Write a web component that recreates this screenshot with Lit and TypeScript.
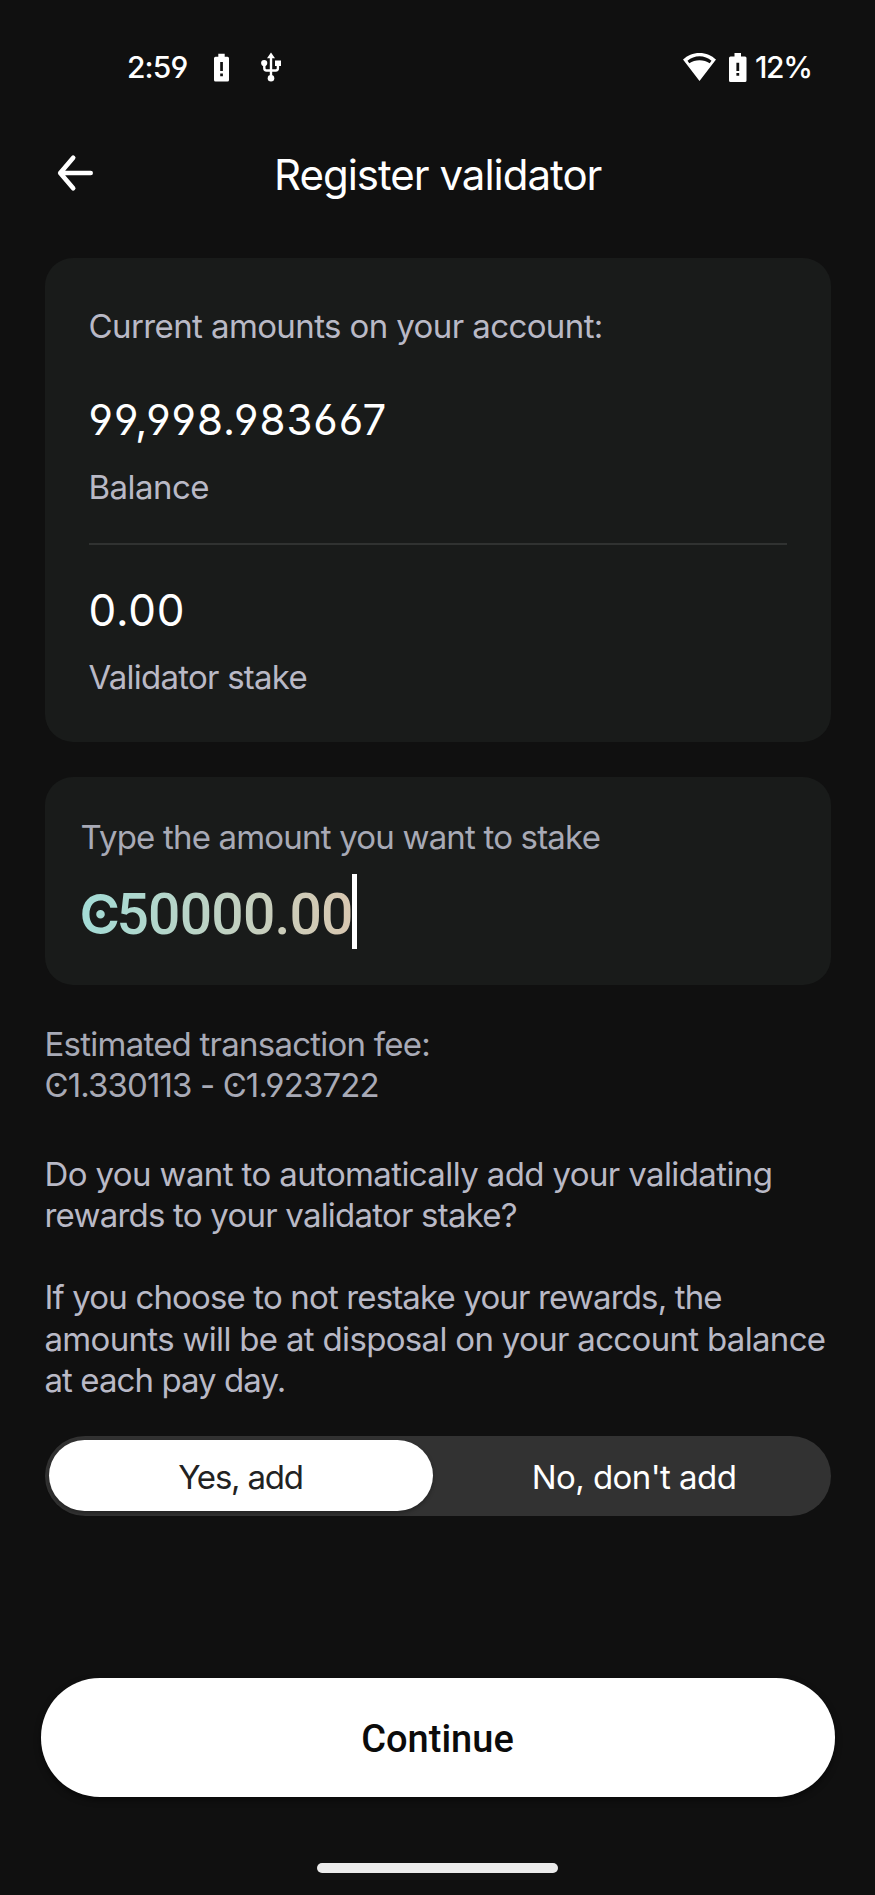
import { LitElement, html, css } from "lit";
import { customElement, property, state } from "lit/decorators.js";
import { styleMap } from "lit/directives/style-map.js";
import { classMap } from "lit/directives/class-map.js";

interface Line {
  text: string;
  tracking: number;
}

/** One line of text whose tracking is given in pixels. */
@customElement("tracked-line")
class TrackedLine extends LitElement {
  @property() text = "";
  @property({ type: Number }) tracking = 0;
  static styles = css`
    :host {
      display: block;
      white-space: nowrap;
    }
  `;
  render() {
    return html`<span style=${styleMap({ letterSpacing: `${this.tracking}px` })}>${this.text}</span>`;
  }
}

const tracked = (l: Line) => html`<tracked-line .text=${l.text} .tracking=${l.tracking}></tracked-line>`;

@customElement("status-bar")
class StatusBar extends LitElement {
  static styles = css`
    :host {
      display: flex;
      align-items: center;
      height: 134px;
      padding-left: 127px;
      font-size: 30px;
      font-weight: 500;
      color: #fff;
      letter-spacing: -0.9px;
    }
    .time {
      width: 60px;
      white-space: nowrap;
    }
    .level {
      width: 120px;
      margin-left: 8.5px;
      letter-spacing: -1.4px;
    }
    svg {
      display: block;
      flex: none;
    }
    .alert {
      margin-left: 27px;
    }
    .usb {
      margin-left: 32px;
    }
    .wifi {
      margin-left: auto;
    }
    .battery {
      margin-left: 13.5px;
    }
  `;
  render() {
    return html`
      <span class="time">2:59</span>
      <svg class="alert" width="15" height="29" viewBox="0 0 15 29">
        <path fill="#fff" fill-rule="evenodd" d="M4.3.8h6.4v2.9h2.8q1.5 0 1.5 1.5V27q0 1.5-1.5 1.5h-12Q0 28.500 0 27V5.200q0-1.500 1.500-1.500h2.800zM6.200 9v9h2.700V9zM6.200 20.500v2.800h2.700v-2.800z" />
      </svg>
      <svg class="usb" width="20" height="30" viewBox="0 0 20 30">
        <path fill="none" stroke="#fff" stroke-width="2.400" d="M10 4v21M3.300 11v5.300q0 2.200 2.200 2.200h9.200q2.200 0 2.200-2.200V11" />
        <path fill="#fff" d="M10 .5l4 5.700H6zM14 8.500h6v5.600h-6z" />
        <circle cx="3.200" cy="11" r="3.100" fill="#fff" />
        <circle cx="10" cy="26.200" r="3.300" fill="#fff" />
      </svg>
      <svg class="wifi" width="33" height="28" viewBox="0 0 33 28">
        <path fill="#fff" fill-rule="evenodd" d="M16.500 0C10 0 4.300 2.500 0 6.600L16.500 28 33 6.600C28.700 2.500 23 0 16.500 0zM4.500 7.800C8 4.900 12 3.300 16.500 3.300S25 4.900 28.500 7.800l-1.800 2.500C23.800 8.300 20.300 7.300 16.500 7.300S9.200 8.300 6.300 10.300z" />
      </svg>
      <svg class="battery" width="17.5" height="29" viewBox="0 0 17.500 29">
        <path fill="#fff" fill-rule="evenodd" d="M5.500 0h6.500v3.500h4q1.500 0 1.500 1.500v22.500q0 1.500-1.500 1.500H1.500Q0 29 0 27.500V5q0-1.500 1.500-1.500h4zM7.400 9.800v8.200h2.800V9.800zM7.400 20v2.800h2.800V20z" />
      </svg>
      <span class="level">12%</span>
    `;
  }
}

@customElement("app-root")
class AppRoot extends LitElement {
  @state() private restake = true;

  private fee: Line[] = [
    { text: "Estimated transaction fee:", tracking: -0.76 },
    { text: "Ͼ1.330113 - Ͼ1.923722", tracking: -0.88 },
  ];
  private question: Line[] = [
    { text: "Do you want to automatically add your validating", tracking: -0.62 },
    { text: "rewards to your validator stake?", tracking: -0.78 },
  ];
  private note: Line[] = [
    { text: "If you choose to not restake your rewards, the", tracking: -0.85 },
    { text: "amounts will be at disposal on your account balance", tracking: -0.68 },
    { text: "at each pay day.", tracking: -0.93 },
  ];

  static styles = css`
    :host {
      display: flex;
      flex-direction: column;
      box-sizing: border-box;
      width: 875px;
      height: 1895px;
      overflow: hidden;
      background: #101010;
      color: #b9b9c6;
      font-family: "Inter", "Liberation Sans", sans-serif;
      font-size: 33px;
      line-height: 42px;
      font-feature-settings: "cv03", "cv04", "calt" 0;
    }
    .header {
      display: flex;
      align-items: center;
      height: 81px;
      padding-left: 56px;
      color: #fff;
    }
    .back {
      margin-bottom: 4px;
    }
    .title {
      margin-left: 178px;
      font-size: 42px;
    }
    .card {
      box-sizing: border-box;
      margin: 0 44.5px;
      border-radius: 28px;
      background: #191b1a;
    }
    .balances {
      height: 484.5px;
      margin-top: 42.5px;
      padding: 47px 44px 0 44px;
    }
    .figure {
      font-size: 42px;
      line-height: 50px;
      color: #fff;
      margin-bottom: 21px;
    }
    .wide {
      font-size: 44px;
    }
    .intro {
      margin-bottom: 48px;
    }
    .divider {
      height: 2px;
      margin: 35.5px 0 40px 0;
      background: #303231;
    }
    .stake {
      height: 207.5px;
      margin-top: 35px;
      padding: 39px 36px 0 36px;
      color: #a8aab6;
    }
    .entry {
      display: flex;
      height: 75px;
      margin-top: 16px;
    }
    .amount {
      width: 271px;
      padding-top: 3px;
      white-space: nowrap;
      font-family: "Roboto", sans-serif;
      font-size: 57px;
      font-weight: 500;
      line-height: 75px;
      letter-spacing: -0.8px;
      color: transparent;
      background: linear-gradient(90deg, #a3dcd6, #d8c7b0);
      background-clip: text;
      -webkit-background-clip: text;
    }
    .coin {
      display: inline-block;
      width: 37px;
      margin-left: -1px;
      font-family: "Inter", sans-serif;
      font-size: 55px;
      font-weight: 600;
      letter-spacing: -4px;
      line-height: 60px;
    }
    .caret {
      width: 5.5px;
      background: #fff;
    }
    .copy {
      margin: 0 0 0 44.5px;
      line-height: 41.3px;
    }
    .fee {
      margin-top: 39.5px;
      color: #a8aab6;
    }
    .question {
      margin-top: 47px;
    }
    .note {
      margin-top: 41.3px;
    }
    .toggle {
      display: grid;
      grid-template-columns: 384px 1fr;
      box-sizing: border-box;
      height: 80px;
      margin: 34.5px 44.5px 0;
      padding: 4px 0 4px 4px;
      border-radius: 40px;
      background: #323232;
    }
    .option {
      display: flex;
      justify-content: center;
      align-items: center;
      padding-top: 2px;
      box-sizing: border-box;
      height: 71.5px;
      border-radius: 36px;
      color: #fff;
    }
    .option:last-child {
      padding-left: 5px;
    }
    .chosen {
      background: #fff;
      color: #222;
      box-shadow: 0 2px 4px rgba(0, 0, 0, 0.3);
    }
    .continue {
      display: flex;
      justify-content: center;
      align-items: center;
      box-sizing: border-box;
      height: 119px;
      margin: 162px 40.5px 0;
      padding-top: 4px;
      border-radius: 59px;
      background: #fff;
      color: #0b0b0b;
      font-family: "Roboto", sans-serif;
      font-size: 38px;
      font-weight: 500;
      box-shadow: 0 3px 6px rgba(0, 0, 0, 0.5);
    }
    .home {
      align-self: center;
      width: 241px;
      height: 10px;
      margin-top: 66px;
      border-radius: 5px;
      background: #ebebeb;
    }
  `;

  render() {
    return html`
      <status-bar></status-bar>
      <div class="header">
        <svg class="back" width="40" height="40" viewBox="0 0 40 40">
          <path fill="none" stroke="#fff" stroke-width="4.600" stroke-linecap="round" stroke-linejoin="round" d="M17.200 4.700L4.200 20l13 15.300M4.200 20h30.500" />
        </svg>
        <div class="title">${tracked({ text: "Register validator", tracking: -1 })}</div>
      </div>
      <div class="card balances">
        <div class="intro">${tracked({ text: "Current amounts on your account:", tracking: -0.6 })}</div>
        <div class="figure">${tracked({ text: "99,998.983667", tracking: 1 })}</div>
        ${tracked({ text: "Balance", tracking: -0.55 })}
        <div class="divider"></div>
        <div class="figure wide">${tracked({ text: "0.00", tracking: 0.8 })}</div>
        ${tracked({ text: "Validator stake", tracking: -0.76 })}
      </div>
      <div class="card stake">
        ${tracked({ text: "Type the amount you want to stake", tracking: -0.81 })}
        <div class="entry">
          <div class="amount"><span class="coin">Ͼ</span>50000.00</div>
          <div class="caret"></div>
        </div>
      </div>
      <div class="copy fee">${this.fee.map(tracked)}</div>
      <div class="copy question">${this.question.map(tracked)}</div>
      <div class="copy note">${this.note.map(tracked)}</div>
      <div class="toggle">
        <div class=${classMap({ option: true, chosen: this.restake })} @click=${() => (this.restake = true)}>
          ${tracked({ text: "Yes, add", tracking: -1.2 })}
        </div>
        <div class=${classMap({ option: true, chosen: !this.restake })} @click=${() => (this.restake = false)}>
          ${tracked({ text: "No, don't add", tracking: -0.55 })}
        </div>
      </div>
      <div class="continue">Continue</div>
      <div class="home"></div>
    `;
  }
}
